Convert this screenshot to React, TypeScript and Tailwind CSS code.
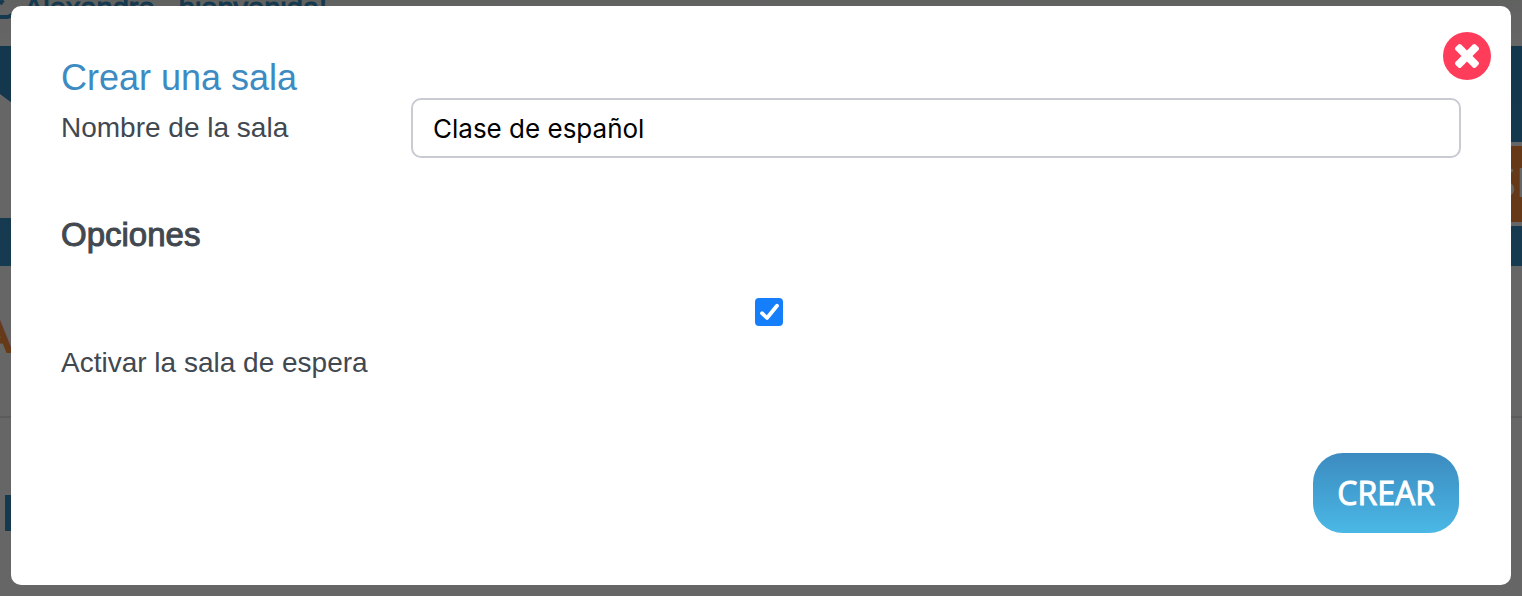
import React, { useState } from 'react'

function CloseIcon() {
    return (
        <svg className="size-6" viewBox="302 366 1188 1188" fill="currentColor" aria-hidden="true">
            <path d="M1490 1322q0 40-28 68l-136 136q-28 28-68 28t-68-28l-294-294-294 294q-28 28-68 28t-68-28l-136-136q-28-28-28-68t28-68l294-294-294-294q-28-28-28-68t28-68l136-136q28-28 68-28t68 28l294 294 294-294q28-28 68-28t68 28l136 136q28 28 28 68t-28 68l-294 294 294 294q28 28 28 68z" />
        </svg>
    )
}

function Backdrop() {
    return (
        <div aria-hidden="true" className="h-dvh overflow-hidden bg-white">
            <header className="flex h-[46px] items-start gap-3 overflow-hidden bg-linear-to-b from-[#f1f4f1] to-white">
                <svg className="h-5 w-3 shrink-0" viewBox="0 0 12 20" fill="none" stroke="#358fc4" strokeWidth="4">
                    <path d="M0 17 H7 Q9 17 12 15" />
                    <path d="M0 4 L3 0" />
                </svg>
                <p className="-mt-2 font-['Liberation_Sans'] text-[29px] leading-8 text-[#358fc4] [-webkit-text-stroke:1px]">Alexandre , bienvenida!</p>
            </header>

            <div className="flex h-[220px] items-stretch justify-between bg-linear-to-b from-[#3089be] to-[#3892c6]">
                <svg className="h-[172px] w-3" viewBox="0 0 12 172">
                    <path d="M0 48 L12 57 V172 H0 Z" fill="#ffffff" />
                </svg>
                <div className="mt-24 h-[84px] w-7 overflow-hidden border-y-4 border-white bg-[#ff913c] font-['Open_Sans'] text-[40px] leading-[72px] whitespace-nowrap text-white">
                    SI
                </div>
            </div>

            <div className="h-[152px] border-b-2 border-gray-200 pt-11">
                <span className="-ml-5 font-['Liberation_Sans'] text-5xl leading-[52px] text-[#ff913c] [-webkit-text-stroke:2px]">A</span>
            </div>
            <div className="mt-[77px] ml-[5px] h-9 w-40 bg-[#358fc4]" />
        </div>
    )
}

export default function App() {
    const [name, setName] = useState('Clase de español')
    const [waiting, setWaiting] = useState(true)

    return (
        <main className="font-['Liberation_Sans',sans-serif] text-[#414850]">
            <Backdrop />

            <div className="fixed inset-0 overflow-y-auto bg-black/60 px-[11px] pt-[6px] pb-[11px]">
                <form
                    role="dialog"
                    aria-labelledby="title"
                    onSubmit={(e) => e.preventDefault()}
                    className="relative min-h-full rounded-[10px] bg-white px-[50px] pt-[52px] pb-12"
                >
                    <button
                        type="button"
                        aria-label="Cerrar"
                        className="absolute top-[26px] right-5 flex size-12 items-center justify-center rounded-full bg-[#ff3d5b] text-white"
                    >
                        <CloseIcon />
                    </button>

                    <h1 id="title" className="text-4xl leading-10 text-[#3c8bc2]">Crear una sala</h1>

                    <div className="flex items-start">
                        <label htmlFor="name" className="w-[350px] shrink-0 text-[28px] leading-[60px]">Nombre de la sala</label>
                        <input
                            id="name"
                            type="text"
                            value={name}
                            onChange={(e) => setName(e.target.value)}
                            className="h-[60px] min-w-0 flex-1 rounded-[10px] border-2 border-[#c8ccd2] bg-white px-5 font-[Inter] text-[26px] text-black outline-none"
                        />
                    </div>

                    <h2 className="mt-14 text-[33px] leading-[42px] [-webkit-text-stroke:1px]">Opciones</h2>

                    <div className="mt-[42px] flex flex-col">
                        <span className="relative ml-[694px] size-7">
                            <input
                                id="waiting"
                                type="checkbox"
                                checked={waiting}
                                onChange={(e) => setWaiting(e.target.checked)}
                                className="peer block size-7 appearance-none rounded border-2 border-gray-400 checked:border-[#157efb] checked:bg-[#157efb]"
                            />
                            <svg
                                className="pointer-events-none absolute inset-0 hidden size-7 peer-checked:block"
                                viewBox="0 0 28 28"
                                fill="none"
                                stroke="white"
                                strokeWidth="3.8"
                                strokeLinecap="round"
                                strokeLinejoin="round"
                            >
                                <path d="M7 15.2 L12 20 L22 7.8" />
                            </svg>
                        </span>
                        <label htmlFor="waiting" className="mt-4 text-[28px] leading-[42px]">Activar la sala de espera</label>
                    </div>

                    <div className="mt-[69px] flex justify-end pr-[2px]">
                        <button
                            type="submit"
                            className="h-20 rounded-[30px] bg-linear-to-b from-[#3c8bc0] to-[#4ab8e5] px-6 font-['Open_Sans'] text-[32px] text-white [-webkit-text-stroke:1px]"
                        >
                            CREAR
                        </button>
                    </div>
                </form>
            </div>
        </main>
    )
}
